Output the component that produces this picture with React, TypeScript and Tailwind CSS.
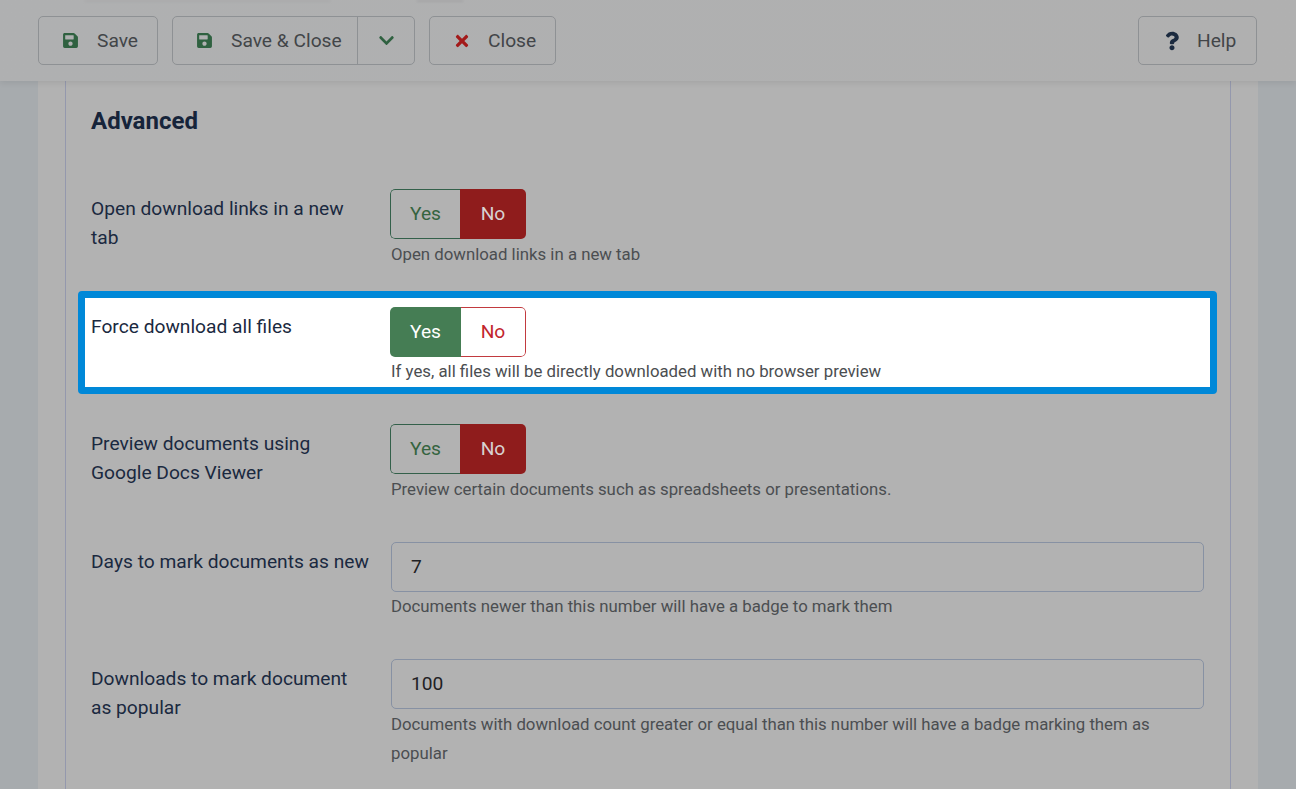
import { FaSave, FaTimes, FaQuestion, FaChevronDown } from "react-icons/fa";

function ToolButton({ icon, label, className = "" }: { icon: React.ReactNode; label: string; className?: string }) {
  return (
    <div className={`h-[49px] flex items-center border border-[#8e9194] rounded-[5px] text-[#424548] text-[19.2px] ${className}`}>
      {icon}
      <span className="pt-[2px]">{label}</span>
    </div>
  );
}

function Toggle({ bright }: { bright?: boolean }) {
  if (bright) {
    return (
      <div className="w-[136px] h-[50px] flex text-[19.2px] rounded-[5px] overflow-hidden">
        <div className="w-[71px] flex items-center justify-center bg-[#457d54] text-white">Yes</div>
        <div className="flex-1 flex items-center justify-center border border-l-0 border-[#c23a3f] rounded-r-[5px] text-[#c2262c] bg-white">No</div>
      </div>
    );
  }
  return (
    <div className="w-[136px] h-[50px] flex text-[19.2px] rounded-[5px] overflow-hidden">
      <div className="w-[70px] flex items-center justify-center border border-r-0 border-[#33604a] rounded-l-[5px] text-[#35643f]">Yes</div>
      <div className="flex-1 flex items-center justify-center bg-[#8f1c1c] text-[#d8d2d2]">No</div>
    </div>
  );
}

function Row({ label, hint, children, nudge }: { label: React.ReactNode; hint: React.ReactNode; children: React.ReactNode; nudge?: boolean }) {
  return (
    <div className="flex">
      <div className="w-[324px] pl-[25px] pr-[20px] shrink-0 text-[19.2px] leading-[28.8px] text-[#1a2940] pt-[6px]">{label}</div>
      <div className="flex-1 pr-[26px]">
        {children}
        <div className={`pl-[1px] text-[16.8px] leading-[29px] text-[#4b4e51] ${nudge ? "mt-px" : ""}`}>{hint}</div>
      </div>
    </div>
  );
}

function NumberInput({ value }: { value: string }) {
  return (
    <div className="ml-px h-[50px] flex items-center pl-[19px] border border-[#8791a3] rounded-[5px] text-[19.2px] text-[#1f2124]">{value}</div>
  );
}

export default function App() {
  return (
    <div className="w-[1296px] h-[789px] overflow-hidden bg-[#a7abae] font-['Roboto',sans-serif]">
      <div className="relative h-[81px] flex items-center justify-between pl-[38px] pr-[39px] bg-gradient-to-r from-[#afb0b1] to-[#b0b0b0] shadow-[0_2px_6px_rgba(0,0,0,0.08)]">
        {/* content scrolled behind the toolbar, barely visible through the blur */}
        <div className="absolute top-0 left-[85px] h-[2px] flex gap-[87px] blur-[1px]">
          <div className="w-[245px] bg-[#a9aaab]" />
          <div className="w-[46px] bg-[#a4a5a6]" />
        </div>
        <div className="flex gap-[14px]">
          <ToolButton className="w-[120px] pl-[23px] gap-[18px]" icon={<FaSave className="text-[#2f6140] w-[17px] h-[17px]" />} label="Save" />
          <div className="flex h-[49px] w-[243px] border border-[#8e9194] rounded-[5px] text-[#424548] text-[19.2px]">
            <div className="w-[185px] flex items-center pl-[23px] gap-[18px] border-r border-[#8e9194]">
              <FaSave className="text-[#2f6140] w-[17px] h-[17px]" />
              <span className="pt-[2px]">Save &amp; Close</span>
            </div>
            <div className="flex-1 flex items-center justify-center">
              <FaChevronDown className="text-[#2f6140] w-[17px] h-[17px]" />
            </div>
          </div>
          <ToolButton className="w-[127px] pl-[23px] gap-[17px]" icon={<FaTimes className="text-[#a31a1a] w-[18px] h-[18px]" />} label="Close" />
        </div>
        <ToolButton className="w-[119px] pl-[26px] gap-[18px]" icon={<FaQuestion className="text-[#1b2a3f] w-[14px] h-[20px]" />} label="Help" />
      </div>

      <div className="mx-[38px] w-[1220px] h-[708px] bg-[#b2b2b2] pl-[27px]">
        <div className="w-[1166px] h-full border-x border-[#9498ad]">
          <h2 className="pl-[25px] pt-[24px] text-[24px] leading-[32px] font-bold text-[#16243a]">Advanced</h2>
          <div className="pt-[52px]">
            <Row nudge label="Open download links in a new tab" hint="Open download links in a new tab">
              <Toggle />
            </Row>
          </div>
          <div className="ml-[12px] mr-[13px] mt-[22px] h-[103px] border-[7px] border-[#0088d8] rounded-[4px] bg-white">
            <div className="-ml-[19px] -mr-[20px] pt-[9px]">
              <Row label="Force download all files" hint="If yes, all files will be directly downloaded with no browser preview">
                <Toggle bright />
              </Row>
            </div>
          </div>
          <div className="pt-[30px]">
            <Row nudge label="Preview documents using Google Docs Viewer" hint="Preview certain documents such as spreadsheets or presentations.">
              <Toggle />
            </Row>
          </div>
          <div className="pt-[38px]">
            <Row label="Days to mark documents as new" hint="Documents newer than this number will have a badge to mark them">
              <NumberInput value="7" />
            </Row>
          </div>
          <div className="pt-[38px]">
            <Row nudge label="Downloads to mark document as popular" hint="Documents with download count greater or equal than this number will have a badge marking them as popular">
              <NumberInput value="100" />
            </Row>
          </div>
        </div>
      </div>
    </div>
  );
}
